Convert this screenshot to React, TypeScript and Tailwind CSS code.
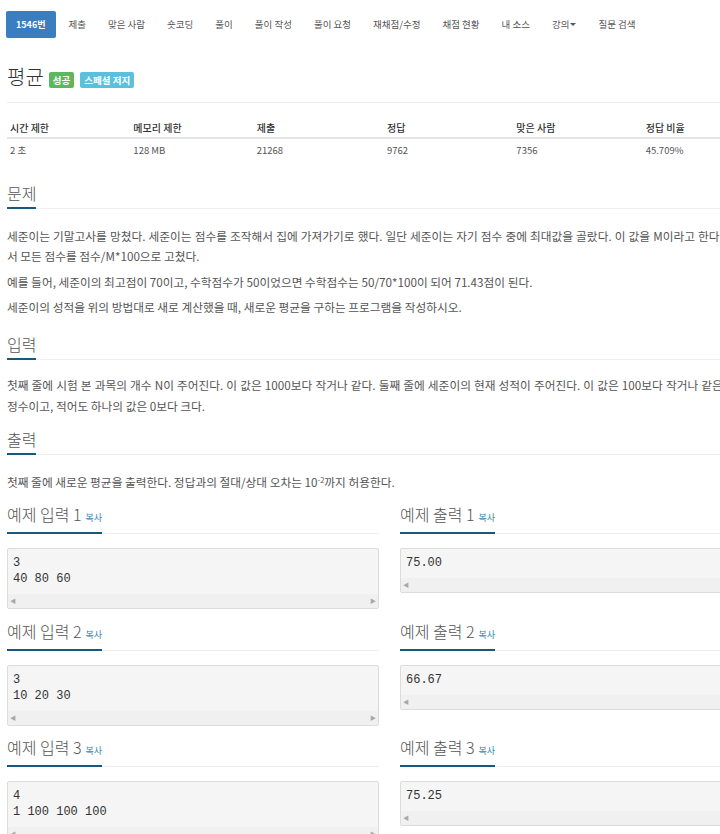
import React from "react";

const KR = "font-['Noto_Sans_CJK_KR','Noto_Sans',sans-serif]";

function SecHead({ children, className = "" }: { children: React.ReactNode; className?: string }) {
  return (
    <div className={`flex border-b border-[#eee] ${className}`}>
      <div className="-mb-px flex items-baseline border-b-2 border-[#17597c] pb-[1px] text-[16px] font-light leading-[26px] text-[#555]">
        {children}
      </div>
    </div>
  );
}

function ExHead({ title }: { title: string }) {
  return (
    <SecHead>
      <span>{title}</span>
      <span className="ml-[4px] text-[9px] font-normal text-[#3b7fae]">복사</span>
    </SecHead>
  );
}

function Pre({ lines }: { lines: string[] }) {
  return (
    <div className="mt-[14px] rounded-[2px] border border-[#dcdcdc] bg-[#f5f5f5]">
      <div className="px-[5px] pt-[6px] pb-[7px] font-['Liberation_Mono',monospace] text-[12px] leading-[16px] text-[#333]">
        {lines.map((l, i) => (
          <div key={i}>{l}</div>
        ))}
      </div>
      <div className="flex h-[14px] items-center justify-between bg-[#f0f0f0] px-[2px] text-[6px] leading-none text-[#a8a8a8]">
        <span>◀</span>
        <span>▶</span>
      </div>
    </div>
  );
}

function ExRow({ n, input, output, className = "" }: { n: number; input: string[]; output: string[]; className?: string }) {
  return (
    <div className={`grid grid-cols-[372px_372px] gap-x-[21px] items-start ${className}`}>
      <div>
        <ExHead title={`예제 입력 ${n}`} />
        <Pre lines={input} />
      </div>
      <div>
        <ExHead title={`예제 출력 ${n}`} />
        <Pre lines={output} />
      </div>
    </div>
  );
}

export default function App() {
  const nav = ["제출", "맞은 사람", "숏코딩", "풀이", "풀이 작성", "풀이 요청", "재채점/수정", "채점 현황", "내 소스"];
  const cols = [
    { h: "시간 제한", v: "2 초", w: "w-[124px]" },
    { h: "메모리 제한", v: "128 MB", w: "w-[124px]" },
    { h: "제출", v: "21268", w: "w-[131px]" },
    { h: "정답", v: "9762", w: "w-[130px]" },
    { h: "맞은 사람", v: "7356", w: "w-[130px]" },
    { h: "정답 비율", v: "45.709%", w: "w-[130px]" },
  ];
  return (
    <div className={`h-[834px] w-[720px] overflow-hidden bg-white ${KR}`}>
      <div className="w-[772px] pl-[7px]">
        {/* nav */}
        <div className="-ml-px mt-[11px] flex h-[27px] items-center text-[9.5px] text-[#555]">
          <div className="flex h-[27px] items-center rounded-[2px] bg-[#3a7ebf] px-[10px] text-[9px] font-semibold text-white">1546번</div>
          <div className="ml-[2px] flex">
            {nav.map((n) => (
              <div key={n} className="px-[11px]">{n}</div>
            ))}
            <div className="flex items-center px-[11px]">
              강의
              <span className="ml-[1px] inline-block h-0 w-0 border-x-[3px] border-t-[3px] border-x-transparent border-t-[#555]" />
            </div>
            <div className="px-[11px]">질문 검색</div>
          </div>
        </div>

        {/* title */}
        <div className="mt-[24px] flex items-center border-b border-[#eee] pb-[10px]">
          <span className="text-[20px] font-light leading-[30px] text-[#333]">평균</span>
          <span className="ml-[5px] mt-[5px] rounded-[2px] bg-[#5cb85c] px-[4px] text-[9.5px] font-semibold leading-[16px] text-white">성공</span>
          <span className="ml-[6px] mt-[5px] rounded-[2px] bg-[#5bc0de] px-[4px] text-[9.5px] font-semibold leading-[16px] text-white">스페셜 저지</span>
        </div>

        {/* table */}
        <div className="mt-[14px]">
          <div className="flex h-[22px] items-center border-b-2 border-[#e4e4e4] text-[10px] font-medium text-[#333]">
            {cols.map((c) => (
              <div key={c.h} className={`${c.w} pl-[3px]`}>{c.h}</div>
            ))}
          </div>
          <div className="flex h-[22px] items-center text-[9.5px] text-[#555]">
            {cols.map((c) => (
              <div key={c.h} className={`${c.w} pl-[3px]`}>{c.v}</div>
            ))}
          </div>
        </div>

        {/* 문제 */}
        <SecHead className="mt-[19px]">문제</SecHead>
        <div className="mt-[17px] w-[765px] text-[11.7px] leading-[20px] text-[#555]">
          <p>
            <span className="block whitespace-nowrap text-justify [text-align-last:justify]">
              세준이는 기말고사를 망쳤다. 세준이는 점수를 조작해서 집에 가져가기로 했다. 일단 세준이는 자기 점수 중에 최대값을 골랐다. 이 값을 M이라고 한다. 그리고 나
            </span>
            <span className="block">서 모든 점수를 점수/M*100으로 고쳤다.</span>
          </p>
          <p className="mt-[6px]">예를 들어, 세준이의 최고점이 70이고, 수학점수가 50이었으면 수학점수는 50/70*100이 되어 71.43점이 된다.</p>
          <p className="mt-[5px]">세준이의 성적을 위의 방법대로 새로 계산했을 때, 새로운 평균을 구하는 프로그램을 작성하시오.</p>
        </div>

        {/* 입력 */}
        <SecHead className="mt-[14px]">입력</SecHead>
        <div className="mt-[14px] w-[765px] text-[11.7px] leading-[21px] text-[#555]">
          <p>
            <span className="block whitespace-nowrap text-justify [text-align-last:justify]">
              첫째 줄에 시험 본 과목의 개수 N이 주어진다. 이 값은 1000보다 작거나 같다. 둘째 줄에 세준이의 현재 성적이 주어진다. 이 값은 100보다 작거나 같은 음이 아닌
            </span>
            <span className="block">정수이고, 적어도 하나의 값은 0보다 크다.</span>
          </p>
        </div>

        {/* 출력 */}
        <SecHead className="mt-[10px]">출력</SecHead>
        <div className="mt-[17px] text-[11.7px] leading-[20px] text-[#555]">
          <p>
            첫째 줄에 새로운 평균을 출력한다. 정답과의 절대/상대 오차는 10
            <sup className="text-[7.5px]">-2</sup>
            까지 허용한다.
          </p>
        </div>

        <ExRow n={1} input={["3", "40 80 60"]} output={["75.00"]} className="mt-[9px]" />
        <ExRow n={2} input={["3", "10 20 30"]} output={["66.67"]} className="mt-[9px]" />
        <ExRow n={3} input={["4", "1 100 100 100"]} output={["75.25"]} className="mt-[8px]" />
      </div>
    </div>
  );
}
